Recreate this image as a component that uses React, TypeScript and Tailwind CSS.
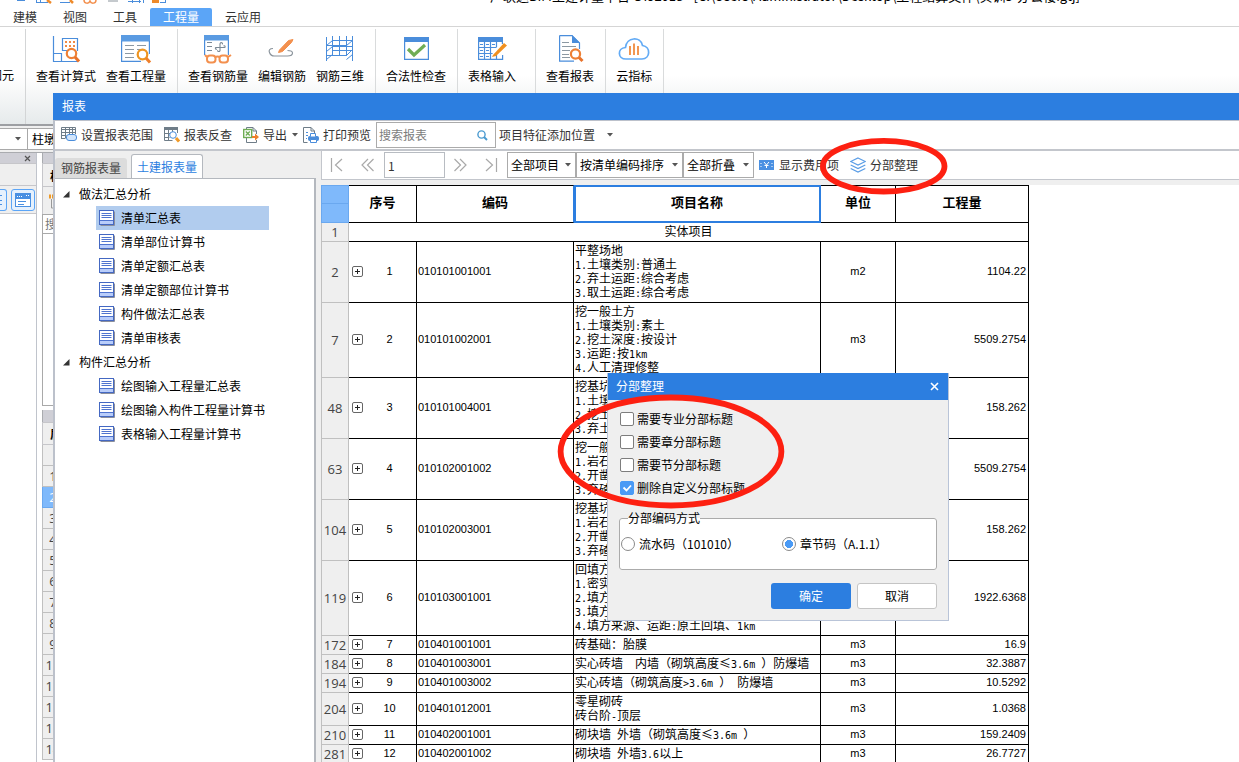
import { useState } from "react";
import type { ReactNode } from "react";

interface BillRow {
  line: number;
  no: number;
  code: string;
  desc: string[];
  unit?: string;
  qty: string;
}

const BILL_ROWS: BillRow[] = [
  { line: 2, no: 1, code: "010101001001", desc: ["平整场地", "1.土壤类别:普通土", "2.弃土运距:综合考虑", "3.取土运距:综合考虑"], unit: "m2", qty: "1104.22" },
  { line: 7, no: 2, code: "010101002001", desc: ["挖一般土方", "1.土壤类别:素土", "2.挖土深度:按设计", "3.运距:按1km", "4.人工清理修整"], unit: "m3", qty: "5509.2754" },
  { line: 48, no: 3, code: "010101004001", desc: ["挖基坑", "1.土壤", "2.挖土", "3.弃土"], qty: "158.262" },
  { line: 63, no: 4, code: "010102001002", desc: ["挖一般", "1.岩石", "2.开凿", "3.弃碴"], qty: "5509.2754" },
  { line: 104, no: 5, code: "010102003001", desc: ["挖基坑", "1.岩石", "2.开凿", "3.弃碴"], qty: "158.262" },
  { line: 119, no: 6, code: "010103001001", desc: ["回填方", "1.密实", "2.填方", "3.填方", "4.填方来源、运距:原土回填、1km"], qty: "1922.6368" },
  { line: 172, no: 7, code: "010401001001", desc: ["砖基础：胎膜"], unit: "m3", qty: "16.9" },
  { line: 184, no: 8, code: "010401003001", desc: ["实心砖墙  内墙（砌筑高度≤3.6m ）防爆墙"], unit: "m3", qty: "32.3887" },
  { line: 194, no: 9, code: "010401003002", desc: ["实心砖墙（砌筑高度>3.6m ） 防爆墙"], unit: "m3", qty: "10.5292" },
  { line: 204, no: 10, code: "010401012001", desc: ["零星砌砖", "砖台阶-顶层"], unit: "m3", qty: "1.0368" },
  { line: 210, no: 11, code: "010402001001", desc: ["砌块墙 外墙（砌筑高度≤3.6m ）"], unit: "m3", qty: "159.2409" },
  { line: 281, no: 12, code: "010402001002", desc: ["砌块墙 外墙3.6以上"], unit: "m3", qty: "26.7727" },
];

const TREE = [
  {
    title: "做法汇总分析",
    items: ["清单汇总表", "清单部位计算书", "清单定额汇总表", "清单定额部位计算书", "构件做法汇总表", "清单审核表"],
  },
  {
    title: "构件汇总分析",
    items: ["绘图输入工程量汇总表", "绘图输入构件工程量计算书", "表格输入工程量计算书"],
  },
];

const MENU = ["建模", "视图", "工具", "工程量", "云应用"];

/* ---------- ribbon icons ---------- */

function RibbonSvg({ children }: { children: ReactNode }) {
  return (
    <svg width="32" height="30" viewBox="0 0 32 30" fill="none" stroke="#4a8ddb" strokeWidth="1.2">
      {children}
    </svg>
  );
}

const FormulaIcon = () => (
  <RibbonSvg>
    <path d="M3.500 1v25.500H28M3.500 18.500h8v8M12.500 14V3.500h15V16M12.500 12v3.500h5" />
    <g fill="#f08a45" stroke="none">
      {[15, 19, 23].map((x) => (
        <g key={x}>
          <rect x={x} y="6" width="2" height="2" />
          <rect x={x} y="10" width="2" height="2" />
        </g>
      ))}
    </g>
    <circle cx="21.500" cy="18.500" r="4.700" stroke="#ee8035" strokeWidth="2.200" fill="#fff" />
    <path d="M25 22l4 4.500" stroke="#e8722a" strokeWidth="3" />
  </RibbonSvg>
);

const QuantityIcon = () => (
  <RibbonSvg>
    <rect x="1" y="0" width="29" height="6.500" fill="#5a9be2" stroke="none" />
    <path d="M1.600 6v20.400H21M29.400 6v13" />
    <path d="M5 10.500h9M5 14.500h9M5 18.500h9M5 22.500h9M17 10.500h9M17 14.500h3M17 18.500h1" stroke="#8b98a3" />
    <circle cx="22.500" cy="19.500" r="4.800" stroke="#ee9520" strokeWidth="2.200" fill="#fff" />
    <path d="M26 23l4 4.500" stroke="#ee7f2a" strokeWidth="3" />
  </RibbonSvg>
);

const RebarQtyIcon = () => (
  <RibbonSvg>
    <rect x="2" y="0" width="25" height="5.500" fill="#5a9be2" stroke="none" />
    <path d="M2.600 5v15M26.400 5v15" />
    <path d="M5 7.500h5M5 11.500h5M5 15.500h5" stroke="#7c8a96" />
    <path d="M13.500 12.500h9.500M18 8.500v7.500M18 8.500c1-1.500 3-1 2.500.800M18 16c-1 1-2.500.500-2.500-.800M13.500 12.500c-.500 1.500.500 2 1.500 1.500M23 12.500c.500-1.500-.500-2-1.500-1.500" stroke="#7c8a96" strokeWidth="1.100" />
    <g stroke="#f3904e" strokeWidth="2">
      <rect x="5" y="20.500" width="8.500" height="7" rx="3" fill="#fff" />
      <rect x="17.500" y="20.500" width="8.500" height="7" rx="3" fill="#fff" />
      <path d="M13 22.500q2.500-2 5 0M5 22l-2-2M26 22l3-2" />
    </g>
  </RibbonSvg>
);

const RebarEditIcon = () => (
  <RibbonSvg>
    <path d="M7 13.500c-3.500 0-4.500 2-3.500 4 .800 2.500 2.500 3.500 5 3.500h13c4 0 5-1 5-3 0-2-1.500-2.500-5-2.500" stroke="#8b949c" />
    <path d="M13.500 15l9-9.500L27 4.500l-1.500 3-9 9-4 1z" fill="#f3904e" stroke="#f3904e" strokeWidth="1" />
  </RibbonSvg>
);

const RebarGridIcon = () => (
  <RibbonSvg>
    <path d="M2.500 2v24M8.500 1v20M15.500 1v20M22.500 1v20M28.500 1v25M2.500 10.500l6-5h20M2.500 10.500h20l6-5M2.500 16.500l6-5h20M2.500 20.500h20l6-6M8.500 15.500h20M2.500 24.500l6-5M22.500 24.500l6-5" strokeWidth="1" />
  </RibbonSvg>
);

const CheckIcon = () => (
  <RibbonSvg>
    <rect x="4" y="2" width="25" height="5" fill="#4a8ddb" stroke="none" />
    <path d="M4.600 6v18.400h23.800V6" />
    <path d="M8 14l6 6L25 10" stroke="#6fad55" strokeWidth="3.200" />
  </RibbonSvg>
);

const TableInputIcon = () => (
  <RibbonSvg>
    <rect x="2" y="2" width="25" height="5" fill="#4a8ddb" stroke="none" />
    <path d="M2.600 6v18.400h24V20M26.400 6v3M2.600 12.500h18M2.600 18.500h14M8.500 6v18M14.500 6v18M20.500 6v6M20.500 20v4M4 9.500h3M10 9.500h3M16 9.500h3M4 15.500h3M10 15.500h3M4 21.500h3M10 21.500h3" />
    <path d="M17 20L28 8l3 2.500L20 21l-4 1z" fill="#f0901f" stroke="none" />
  </RibbonSvg>
);

const ReportIcon = () => (
  <RibbonSvg>
    <path d="M5.600.600H18l7.500 7.500V14M5.600.600v25.500H20" />
    <path d="M18 0l8 8h-8z" fill="#4a8ddb" stroke="none" />
    <path d="M8 7.500h7M8 11.500h14M8 15.500h8M8 19.500h7M8 22.500h8" stroke="#8b98a3" />
    <circle cx="21.500" cy="19" r="4.600" stroke="#ee8035" strokeWidth="2.200" fill="#fff" />
    <path d="M25 22.500l3.500 3.500" stroke="#e8722a" strokeWidth="3" />
  </RibbonSvg>
);

const CloudIcon = () => (
  <RibbonSvg>
    <path d="M8 24c-8.500 0-9-11-.500-11.500C8.500 2 22.500 1 24.500 10.500c8.500 1 8 13.500-.500 13.500z" stroke="#63abf5" strokeWidth="1.700" />
    <path d="M12 11v9M16 8.500v11.500M20 11v9" stroke="#f08c40" strokeWidth="1.800" />
  </RibbonSvg>
);

const RIBBON_GROUPS = [
  [
    { label: "查看计算式", Icon: FormulaIcon },
    { label: "查看工程量", Icon: QuantityIcon },
  ],
  [
    { label: "查看钢筋量", Icon: RebarQtyIcon },
    { label: "编辑钢筋", Icon: RebarEditIcon },
    { label: "钢筋三维", Icon: RebarGridIcon },
  ],
  [{ label: "合法性检查", Icon: CheckIcon }],
  [{ label: "表格输入", Icon: TableInputIcon }],
  [{ label: "查看报表", Icon: ReportIcon }],
  [{ label: "云指标", Icon: CloudIcon }],
];

/* ---------- small icons ---------- */

function SmallSvg({ children }: { children: ReactNode }) {
  return (
    <svg className="shrink-0" width="16" height="16" viewBox="0 0 16 16" fill="none" stroke="#6f7d88" strokeWidth="1">
      {children}
    </svg>
  );
}

const RangeIcon = () => (
  <SmallSvg>
    <path d="M.500 12V.500h14V7M.500 2.500h14M.500 5.500h14M.500 8.500h5M4.500 1v10M8.500 1v6M11.500 1v6M.500 11.500h4" />
    <rect x="5.500" y="7.500" width="10" height="6" rx="2.500" fill="#d3e6fc" stroke="#4a8ddb" />
  </SmallSvg>
);

const LookupIcon = () => (
  <SmallSvg>
    <path d="M0 1.500h14" strokeWidth="3" />
    <path d="M.500 2v11.500h8M13.500 2v4M.500 6.500h6M.500 10.500h5M4.500 2v11M8.500 2v3" />
    <circle cx="9" cy="8" r="3.300" stroke="#4a8ddb" fill="#fff" />
    <path d="M12 11l3 3.500" stroke="#f09a28" strokeWidth="3" />
  </SmallSvg>
);

const ExportIcon = () => (
  <SmallSvg>
    <path d="M3.500 2V.500H10L13.500 4v3M3.500 11v4.500h10V13M10 .500V4h3.500" />
    <rect x=".700" y="2.500" width="8" height="8" fill="#fff" stroke="#6fad55" strokeWidth="1.400" />
    <path d="M2.800 4.500l4 4M6.800 4.500l-4 4" stroke="#6fad55" strokeWidth="1.400" />
    <path d="M9 9h3V6.500l4 3.500-4 3.500V11H9z" fill="#ee7f2a" stroke="none" />
  </SmallSvg>
);

const PrintIcon = () => (
  <SmallSvg>
    <path d="M.500 15.500V.500H8L11.500 4v3M.500 15.500h4M8 .500V4h3.500" />
    <path d="M3 5.500h2M3 8.500h2M3 11.500h1" stroke="#4a8ddb" />
    <rect x="5.500" y="9.500" width="10" height="4" rx="1" fill="#4a8ddb" stroke="#4a8ddb" />
    <path d="M7.500 9.500v-3h5v3M7.500 12.500h6v3h-6z" fill="#fff" stroke="#4a8ddb" />
  </SmallSvg>
);

const FeeIcon = () => (
  <SmallSvg>
    <rect x="0" y="3" width="15" height="10" fill="#4a90e2" stroke="none" />
    <path d="M5 5l2.500 3L10 5M5.500 8.500h4M7.500 8v3M2 6v1M2 9v1M13 6v1M13 9v1" stroke="#fff" />
  </SmallSvg>
);

const LayersIcon = () => (
  <SmallSvg>
    <g stroke="#5a9de6" strokeWidth="1.200">
      <path d="M8 1l7.300 3.500L8 8 .700 4.500z" />
      <path d="M.700 8L8 11.500 15.300 8" />
      <path d="M.700 11.500L8 15l7.300-3.500" />
    </g>
  </SmallSvg>
);

const SheetIcon = () => (
  <SmallSvg>
    <path d="M15.500 1.500v14H1.500" stroke="#8b8f9c" />
    <rect x=".500" y=".500" width="14" height="14" fill="#fff" stroke="#4468c2" />
    <rect x="1" y="11" width="13" height="3" fill="#b9cdfa" stroke="none" />
    <path d="M1 10.500h13M2.500 3.500h10M2.500 5.500h10M2.500 7.500h10" stroke="#4f74cf" />
  </SmallSvg>
);

function Caret() {
  return (
    <svg className="pointer-events-none shrink-0" width="6" height="4" viewBox="0 0 6 4" fill="#555">
      <path d="M0 0h6L3 3.500z" />
    </svg>
  );
}

function ToolButton({ icon, label, caret }: { icon?: ReactNode; label: string; caret?: string }) {
  return (
    <button className="flex shrink-0 items-center gap-1 text-[#333]">
      {icon}
      <span>{label}</span>
      {caret && <span className={caret}><Caret /></span>}
    </button>
  );
}

function NavButton({ label, d }: { label: string; d: string }) {
  return (
    <button aria-label={label} className="flex w-[31px] shrink-0 items-center justify-center pr-[2px]">
      <svg width="14" height="14" viewBox="0 0 14 14" fill="none" stroke="#a9a9a9" strokeWidth="1.200">
        <path d={d} />
      </svg>
    </button>
  );
}

function ToolSelect({ label, value, width }: { label: string; value: string; width: string }) {
  return (
    <div className={`relative flex h-[26px] shrink-0 ${width}`}>
      <select aria-label={label} className="w-full appearance-none border border-[#ababab] bg-white pl-[3px] text-black">
        <option>{value}</option>
      </select>
      <span className="absolute top-[11px] right-[5px]">
        <Caret />
      </span>
    </div>
  );
}

/* half-width characters sit on a 6px pitch beside 12px ideographs */
function MixedText({ text }: { text: string }) {
  return (
    <>
      {text.split(/([\x20-\x7e]+)/).map((part, i) =>
        /^[\x20-\x7e]+$/.test(part) ? (
          <span key={i} className="font-['DejaVu_Sans_Mono',monospace] text-[10px] leading-none">{part}</span>
        ) : (
          part
        )
      )}
    </>
  );
}

/* ---------- main window ---------- */

function Ribbon() {
  return (
    <header>
      <div className="flex h-2 items-start overflow-hidden">
        <svg className="shrink-0" width="490" height="8" viewBox="0 0 490 8" fill="none" stroke="#4a8ddb">
          <path d="M17 .500h8M36 2.500h12M36.500 0v3M40.500 0v3M60 2.500h10M128 1.500h13M132.500 0v3M139.500 0v3M143.500 0v3M160 2.500h6M165.500 0v3" />
          <path d="M47 0l4 3M70 0l3 3" stroke="#ee8a2a" strokeWidth="2.500" />
          <path d="M84 0c0 4 5 4 6 1 1 3 6 3 6-1" stroke="#f3904e" strokeWidth="1.500" />
          <path d="M108 1h10" stroke="#8b949c" />
          <rect x="152" y="0" width="7" height="3" fill="#ee8a2a" stroke="none" />
        </svg>
        <div className="flex h-1 items-end overflow-hidden text-[13px] leading-4 whitespace-nowrap text-black">
          广联达BIM土建计量平台 GTJ2018 - [C:\Users\Administrator\Desktop\工程结算文件\实训5-办公楼.gtj]
        </div>
      </div>
      <nav className="flex h-[19px] border-b border-[#d5d5d5]">
        {MENU.map((name) => (
          <button
            key={name}
            className={`px-[13px] leading-[18px] ${name === "工程量" ? "rounded-t-[2px] bg-[#5ba5f7] text-white" : "text-[#333]"}`}
          >
            {name}
          </button>
        ))}
      </nav>
      <div className="flex h-[97px] bg-linear-to-b from-white from-50% to-[#e6eaeb] pt-[2px]">
        <div className="flex w-[26px] shrink-0 justify-end overflow-hidden border-r border-[#d3d5d6] pt-[38px] pr-[11px] whitespace-nowrap">
          <span>图元</span>
        </div>
        {RIBBON_GROUPS.map((group) => (
          <div
            key={group[0].label}
            className={`flex gap-[10px] border-r border-[#d9dbdc] pl-[10px] ${group[0].label === "表格输入" ? "pr-[19px]" : "pr-[11px]"}`}
          >
            {group.map(({ label, Icon }) => (
              <button key={label} className="flex flex-col items-center pt-[6px] whitespace-nowrap text-black">
                <Icon />
                <span className="pt-[2px] leading-[18px]">{label}</span>
              </button>
            ))}
          </div>
        ))}
      </div>
    </header>
  );
}

function Docks() {
  return (
    <div className="flex min-h-0 flex-1 flex-col overflow-hidden border-t-2 border-[#9d9fa3] bg-[#efefef]">
      <div className="mt-[2px] flex h-[22px] shrink-0 border-y border-[#a9a9a9] bg-white">
        <div className="flex w-[28px] items-center justify-end border-r border-[#a9a9a9] pr-[6px]">
          <Caret />
        </div>
        <span className="pl-1 leading-5">柱墩</span>
      </div>
      <div className="mt-[2px] flex min-h-0 flex-1 gap-[5px] border-t border-[#a9abaf] bg-white">
        <div className="flex w-[37px] shrink-0 flex-col border-r border-[#c0c4cc]">
          <div className="flex h-[10px] items-center justify-end bg-[#cfcfd6] pr-[5px]">
            <svg width="7" height="7" viewBox="0 0 7 7" stroke="#555" strokeWidth="1.200">
              <path d="M1 1l5 5M6 1L1 6" />
            </svg>
          </div>
          <div className="h-[23px] border-y border-[#c6c6ca] bg-[#efefef]" />
          <div className="flex h-[28px] items-center gap-1 border-b border-[#c6c6ca] bg-[#efefef]">
            <button aria-label="列表" className="flex h-[22px] w-[7px] items-center rounded-r-[3px] border border-l-0 border-[#5ba5f7] bg-[#e6f1fd]">
              <svg width="3" height="12" viewBox="0 0 3 12" stroke="#4a90e2"><path d="M0 1.500h2M0 6.500h2M0 10.500h2" /></svg>
            </button>
            <button aria-label="视窗" className="flex h-[22px] w-6 items-center justify-center rounded-[3px] border border-[#5ba5f7] bg-[#e6f1fd]">
              <svg width="16" height="14" viewBox="0 0 16 14" fill="none" stroke="#4a90e2">
                <rect x=".500" y=".500" width="15" height="13" fill="#fff" />
                <rect x="0" y="0" width="16" height="6" fill="#4a90e2" stroke="none" />
                <path d="M2 3.500h6M11 2.500h3" stroke="#fff" strokeDasharray="1 1" />
                <path d="M3 8.500h8M3 11.500h6" />
              </svg>
            </button>
          </div>
        </div>
        <div className="flex w-[60px] shrink-0 flex-col">
          <div className="h-[10px] border-l border-[#a9abaf] bg-[#cfcfd6]" />
          <div className="h-[24px] shrink-0 border-y border-l border-[#c6c6ca] bg-[#efefef] pl-[7px] font-bold leading-[24px]">构</div>
          <div className="flex h-[27px] shrink-0 items-center border-l border-[#c6c6ca] bg-[#efefef] pl-[6px]">
            <svg width="16" height="16" viewBox="0 0 16 16" fill="none" stroke="#999">
              <path d="M2.500 6v9h10" />
              <path d="M0 2.500h6M0 4.500h6" stroke="#ee9a28" strokeWidth="2" strokeDasharray="2 1" />
            </svg>
          </div>
          <div className="h-[20px] shrink-0 border border-[#a9a9a9] bg-white pl-[2px] leading-[18px] text-[#777]">搜</div>
          <div className="h-[172px] shrink-0 border-b border-l border-[#a9a9a9] bg-white" />
          <div className="mt-[4px] h-[12px] shrink-0 border-l border-[#a9abaf] bg-[#cfcfd6]" />
          <div className="h-[23px] shrink-0 border-y border-l border-[#c6c6ca] bg-[#efefef] pl-[7px] font-bold leading-[22px]">属</div>
          <div className="h-[21px] shrink-0 border-b border-l border-[#c0c0c0] bg-[#efefef]" />
          {Array.from({ length: 14 }, (_, i) => i + 1).map((n) => (
            <div
              key={n}
              className={`h-[21px] shrink-0 border-b border-l pr-[39px] text-center font-['Open_Sans',sans-serif] text-[13px] leading-5 ${
                n === 2 ? "border-[#6aa8ef] bg-[#7fb9fb] text-white" : "border-[#c0c0c0] bg-[#efefef] text-[#444]"
              }`}
            >
              {n}
            </div>
          ))}
        </div>
      </div>
    </div>
  );
}

/* ---------- report window ---------- */

function ReportTree() {
  const [selected, setSelected] = useState("清单汇总表");

  return (
    <aside className="flex w-[261px] shrink-0 flex-col pt-[3px]">
      <div className="flex h-[24px] shrink-0 items-end gap-1">
        <button className="h-[20px] rounded-t-[3px] bg-[#dcdcdc] px-[6px] text-[#444]">钢筋报表量</button>
        <button className="h-[24px] rounded-t-[3px] border border-b-0 border-[#b4b8be] bg-white px-[5px] text-[#2c7ee0]">土建报表量</button>
      </div>
      <div className="flex-1 border-t border-r-2 border-[#b4b8be] bg-white pt-[3px] text-black">
        {TREE.map((group) => (
          <div key={group.title}>
            <button className="flex h-6 items-center gap-[9px] pl-2">
              <svg width="7" height="7" viewBox="0 0 7 7" fill="#333"><path d="M6.500 0v6.500H0z" /></svg>
              <span>{group.title}</span>
            </button>
            <ul className="pl-[41px]">
              {group.items.map((item) => (
                <li key={item}>
                  <button
                    onClick={() => setSelected(item)}
                    className={`flex h-6 w-[173px] items-center gap-[6px] pl-[3px] whitespace-nowrap ${selected === item ? "bg-[#b1ccee]" : ""}`}
                  >
                    <SheetIcon />
                    <span>{item}</span>
                  </button>
                </li>
              ))}
            </ul>
          </div>
        ))}
      </div>
    </aside>
  );
}

function BillTable() {
  const cell = "border-r border-b border-black pt-px pb-[3px]";
  const lineNo = "border-x border-b border-[#c0c0c0] bg-[#efefef] p-0 text-center font-['Open_Sans',sans-serif] text-[13px] leading-[14px] text-[#444]";
  const head = "border-y border-r border-black pb-[4px] text-[13px] font-bold";
  const digits = "font-['Liberation_Sans',sans-serif] text-[11px]";

  return (
    <table className="w-[708px] table-fixed border-separate border-spacing-0 text-black leading-[14px]">
      <colgroup>
        <col className="w-[28px]" />
        <col className="w-[68px]" />
        <col className="w-[157px]" />
        <col className="w-[247px]" />
        <col className="w-[75px]" />
        <col className="w-[133px]" />
      </colgroup>
      <thead>
        <tr className="h-[38px]">
          <td className="border border-[#6aa8ef] bg-[#7fb9fb] p-0">
            <div className="h-[18px] border-b border-[#6aa8ef]" />
            <div className="h-[18px]" />
          </td>
          <th className={head}>序号</th>
          <th className="border-y border-r border-y-black border-r-[#2c7ee0] pb-[4px] text-[13px] font-bold">编码</th>
          <th className={`${head} outline-2 -outline-offset-2 outline-[#2c7ee0]`}>项目名称</th>
          <th className={head}>单位</th>
          <th className={head}>工程量</th>
        </tr>
      </thead>
      <tbody>
        <tr>
          <td className={lineNo}>1</td>
          <td colSpan={5} className={`${cell} text-center`}>实体项目</td>
        </tr>
        {BILL_ROWS.map((row) => (
          <tr key={row.line}>
            <td className={lineNo}>{row.line}</td>
            <td className={`${cell} ${digits}`}>
              <div className="flex items-center pl-[3px]">
                <button aria-label="展开" className="flex shrink-0">
                  <svg width="11" height="11" viewBox="0 0 11 11" fill="none" stroke="#222">
                    <rect x=".500" y=".500" width="10" height="10" rx="1.500" stroke="#666" />
                    <path d="M3 5.500h5M5.500 3v5" />
                  </svg>
                </button>
                <span className="flex-1 text-center">{row.no}</span>
              </div>
            </td>
            <td className={`${cell} ${digits} pl-px`}>{row.code}</td>
            <td className={`${cell} pl-px whitespace-pre`}>
              <MixedText text={row.desc.join("\n")} />
            </td>
            <td className={`${cell} ${digits} text-center`}>{row.unit}</td>
            <td className={`${cell} ${digits} pr-[2px] text-right`}>{row.qty}</td>
          </tr>
        ))}
      </tbody>
    </table>
  );
}

function ReportWindow() {
  const [page, setPage] = useState("1");

  return (
    <section className="absolute top-[93px] right-0 bottom-0 left-[53px] flex flex-col overflow-hidden bg-[#efefef]">
      <h1 className="h-[27px] shrink-0 bg-[#2c7ee0] pl-[9px] leading-[26px] text-white">报表</h1>
      <div className="flex min-h-0 flex-1 flex-col border-t border-l-2 border-[#bcc1cb]">
        <div className="flex h-[30px] shrink-0 items-center gap-[5px] border-b-2 border-[#c3c6cc] bg-white pl-[6px]">
          <div className="flex gap-[11px]">
            <ToolButton icon={<RangeIcon />} label="设置报表范围" />
            <ToolButton icon={<LookupIcon />} label="报表反查" />
            <ToolButton icon={<ExportIcon />} label="导出" caret="pl-px" />
          </div>
          <ToolButton icon={<PrintIcon />} label="打印预览" />
          <div className="flex items-center gap-[3px]">
            <div className="relative flex h-[26px] w-[120px]">
              <input aria-label="搜索报表" placeholder="搜索报表" className="w-full border border-[#ababab] bg-white px-[2px] placeholder:text-[#7d7d7d]" />
              <svg className="absolute top-[8px] right-[8px]" width="11" height="11" viewBox="0 0 11 11" fill="none" stroke="#4a9ad0">
                <circle cx="4.500" cy="4.500" r="3.600" strokeWidth="1.400" />
                <path d="M7 7l3 3" strokeWidth="2" />
              </svg>
            </div>
            <ToolButton label="项目特征添加位置" caret="pl-2" />
          </div>
        </div>
        <div className="flex min-h-0 flex-1 gap-[5px]">
          <ReportTree />
          <main className="flex min-w-0 flex-1 flex-col">
            <div className="flex h-[29px] shrink-0 items-center border-b border-l border-[#c3c6cc] bg-white">
              <NavButton label="第一页" d="M1.500 0v14M12 1L5.500 7l6.500 6" />
              <NavButton label="上一页" d="M7 1L1 7l6 6M12.500 1l-6 6 6 6" />
              <input aria-label="页码" value={page} onChange={(e) => setPage(e.target.value)} className="h-[26px] w-[61px] shrink-0 border border-[#b8bcc2] bg-white px-[3px] text-[#333]" />
              <NavButton label="下一页" d="M1.500 1l6 6-6 6M7 1l6 6-6 6" />
              <NavButton label="末页" d="M12.500 0v14M2 1l6.500 6L2 13" />
              <ToolSelect label="项目范围" value="全部项目" width="w-[69px]" />
              <ToolSelect label="排序" value="按清单编码排序" width="w-[107px]" />
              <ToolSelect label="折叠" value="全部折叠" width="w-[71px]" />
              <div className="flex gap-[11px] pl-[5px]">
                <ToolButton icon={<FeeIcon />} label="显示费用项" />
                <ToolButton icon={<LayersIcon />} label="分部整理" />
              </div>
            </div>
            <div className="mt-[5px] min-h-0 flex-1 overflow-hidden bg-white">
              <BillTable />
            </div>
          </main>
        </div>
      </div>
    </section>
  );
}

/* ---------- dialog ---------- */

const TITLE_OPTIONS = ["需要专业分部标题", "需要章分部标题", "需要节分部标题", "删除自定义分部标题"];

function ArrangeDialog() {
  const [checked, setChecked] = useState<string[]>(["删除自定义分部标题"]);
  const [mode, setMode] = useState("章节码（A.1.1）");

  const toggle = (name: string) =>
    setChecked((prev) => (prev.includes(name) ? prev.filter((n) => n !== name) : [...prev, name]));

  return (
    <div role="dialog" aria-label="分部整理" className="absolute top-[373px] left-[607px] w-[342px] border border-t-0 border-[#b9c4d8] bg-[#efefef] text-black">
      <div className="flex h-[27px] items-center justify-between bg-[#2c7ee0] pr-[9px] pb-px pl-2 text-white">
        <h2>分部整理</h2>
        <button aria-label="关闭">
          <svg width="9" height="9" viewBox="0 0 9 9" stroke="#fff" strokeWidth="1.600"><path d="M1 1l7 7M8 1L1 8" /></svg>
        </button>
      </div>
      <div className="px-[11px] pt-[7px] pb-[11px]">
        {TITLE_OPTIONS.map((name) => (
          <label key={name} className="flex h-[23px] items-center gap-[3px] pl-px">
            <span className="relative flex">
              <input
                type="checkbox"
                checked={checked.includes(name)}
                onChange={() => toggle(name)}
                className="peer size-[14px] appearance-none rounded-[2px] border border-[#7d7d7d] bg-white checked:border-[#4a9af5] checked:bg-[#4a9af5]"
              />
              <svg className="pointer-events-none absolute top-0 left-0 hidden peer-checked:block" width="14" height="14" viewBox="0 0 14 14" fill="none" stroke="#fff" strokeWidth="1.800">
                <path d="M3.500 6.500l3 3 4.500-5" />
              </svg>
            </span>
            <span>{name}</span>
          </label>
        ))}
        <fieldset className="mt-[10px] h-[61px] min-w-0 rounded-[3px] border border-[#ababab] bg-white">
          <legend className="ml-[8px] leading-[18px]">分部编码方式</legend>
          <div className="flex pt-[9px]">
            {["流水码（101010）", "章节码（A.1.1）"].map((name) => (
              <label key={name} className="flex w-[161px] shrink-0 items-center gap-1 pl-px">
                <input
                  type="radio"
                  name="mode"
                  checked={mode === name}
                  onChange={() => setMode(name)}
                  className="size-[14px] shrink-0 appearance-none rounded-full border border-[#8a8a8a] bg-white checked:bg-radial checked:from-[#4a9af5] checked:from-45% checked:to-white checked:to-50%"
                />
                <span>{name}</span>
              </label>
            ))}
          </div>
        </fieldset>
        <div className="mt-[13px] flex justify-end gap-[6px]">
          <button className="h-[26px] w-[80px] rounded-[3px] bg-[#2c7ee0] text-white">确定</button>
          <button className="h-[26px] w-[80px] rounded-[3px] border border-[#c4c4c4] bg-white">取消</button>
        </div>
      </div>
    </div>
  );
}

export default function App() {
  return (
    <div className="relative flex h-screen flex-col overflow-hidden bg-white font-['Noto_Sans_CJK_SC',sans-serif] text-xs">
      <Ribbon />
      <Docks />
      <ReportWindow />
      <ArrangeDialog />
      {/* hand-drawn highlights */}
      <svg className="pointer-events-none absolute top-0 left-0" width="1000" height="520" viewBox="0 0 1000 520" fill="none" stroke="#fd2011" strokeWidth="5.800">
        <ellipse cx="883.700" cy="166.200" rx="60.800" ry="25.300" />
        <ellipse cx="671" cy="451.500" rx="110.400" ry="54" />
      </svg>
    </div>
  );
}
